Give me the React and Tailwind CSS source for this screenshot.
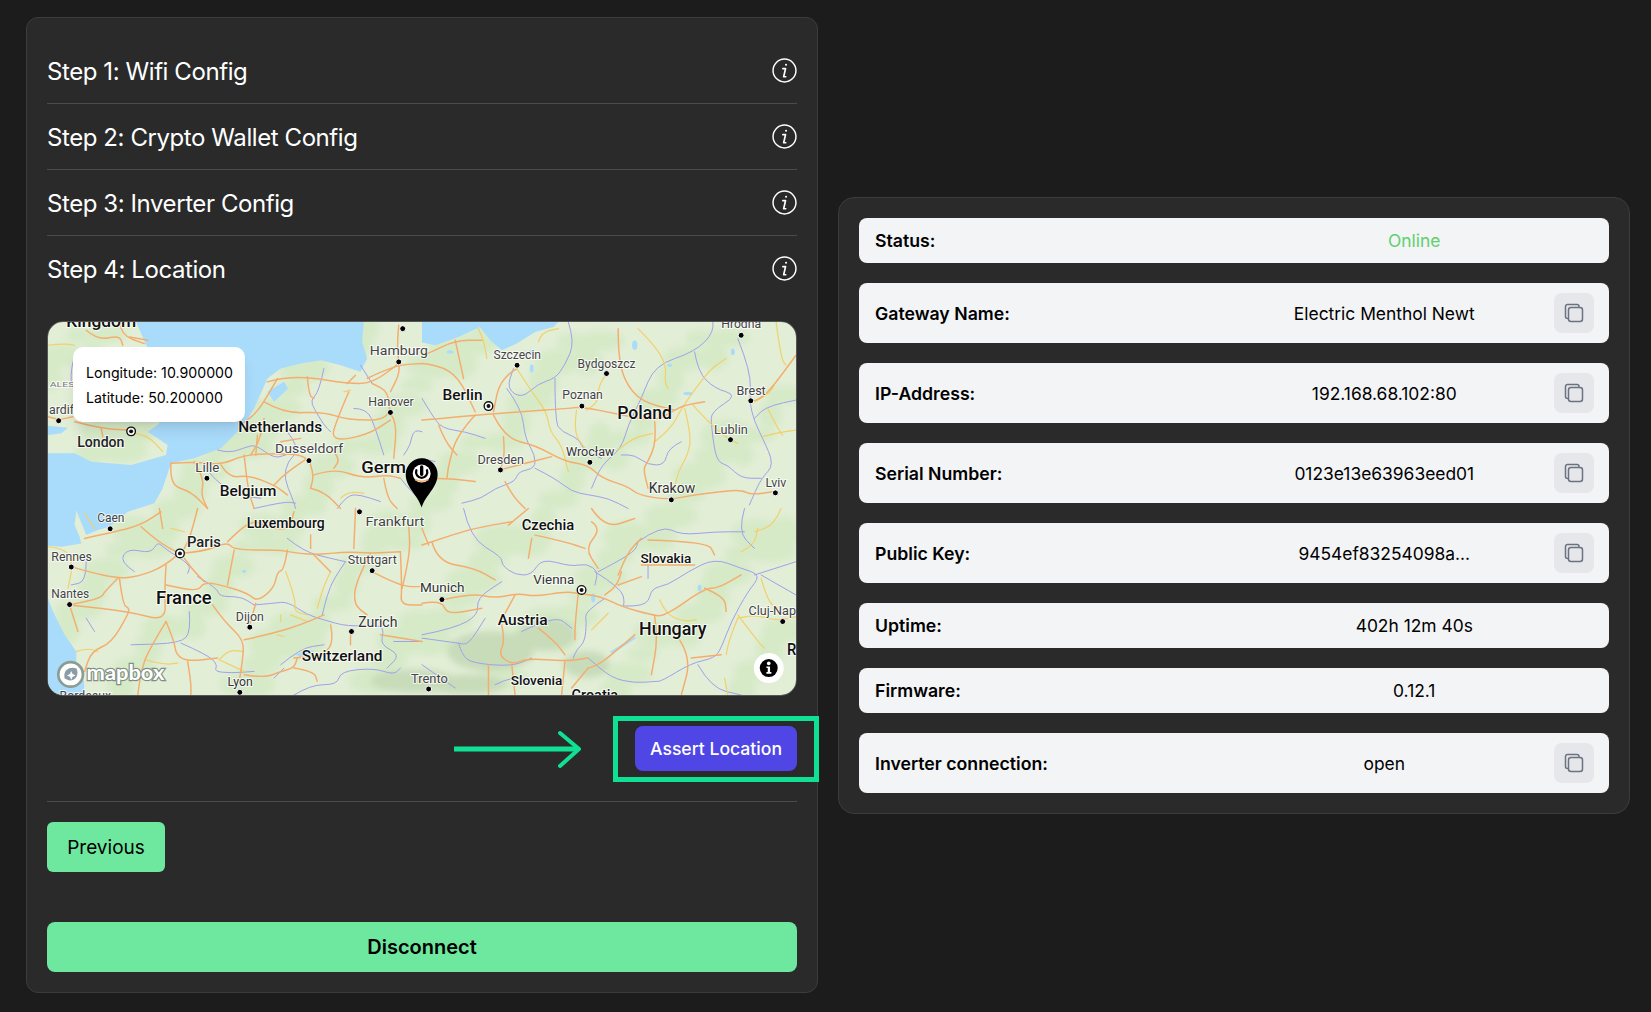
import React from "react";

// map is drawn in a 3x coordinate space (2250x1122), split in four quadrants
const QUADS = [
  {
    dx: 0,
    dy: 0,
    p: [
      "830,140 815,210 790,235 800,260 830,310 850,330",
      "720,330 760,380 720,420 710,470 735,530 745,561",
      "510,385 545,395 600,375 625,370 680,410 715,400",
      "470,430 500,480 590,525 640,530",
      "620,561 710,540 745,545",
      "940,130 975,185",
      "1125,330 1100,320 1090,370 1070,400",
      "920,260 960,260 985,320 1010,400",
      "870,561 900,520 940,520 1000,540",
      "1060,470 1100,520 1125,530",
      "75,120 65,170 80,200",
    ],
    y: ["0,70 50,65 80,70", "890,210 910,205", "880,530 900,510 950,515", "240,330 300,340 345,390"],
    o: [
      "115,25 150,55 215,40 225,70",
      "215,0 220,40 290,65",
      "245,45 300,55",
      "0,285 30,295 75,285",
      "80,300 160,320 240,325",
      "160,320 165,345",
      "660,180 690,170 780,165 900,185 975,185 1055,125",
      "780,165 785,220 800,230",
      "690,170 650,240 620,280 585,305",
      "650,240 710,275 830,270 900,295 1030,295 1025,210 975,185",
      "1055,125 1060,150 1030,210",
      "900,185 925,160",
      "905,210 870,290 850,360 960,340 1030,295",
      "1030,275 1050,300 1040,410",
      "960,170 1040,130 1125,125",
      "1055,10 1050,60 1055,125",
      "370,425 440,420 520,430 590,400 680,395 780,400 800,460 790,500",
      "590,400 600,500 620,561",
      "520,430 545,470 600,460 680,490 720,520",
      "440,420 470,470 460,520 480,561",
      "370,425 365,490 430,510 480,561",
      "630,340 625,400",
      "650,290 640,350 610,400",
      "700,360 760,350",
      "800,460 860,440 945,470 1020,460 1060,470",
      "850,380 880,410 860,440",
      "790,500 830,510 880,561",
      "1010,470 1020,530 1050,561",
      "780,410 720,450 680,490",
    ],
    dots: [[32, 297], [1055, 120], [1067, 20], [1030, 272], [785, 417], [478, 470]],
    rings: [[250, 329]],
    labels: [
      ["Kingdom", 55, 15, 48, 500, 210],
      ["ALES", 5, 195, 24, 400, 75, "#777"],
      ["ardif", 3, 278, 36, 400, 75, "#444"],
      ["Hamburg", 968, 98, 38, 400, 175, "#444"],
      ["Hanover", 963, 254, 36, 400, 137, "#444"],
      ["Netherlands", 572, 330, 44, 500, 253],
      ["Dusseldorf", 683, 395, 40, 400, 205, "#444"],
      ["Germ", 942, 455, 52, 500, 135],
      ["London", 88, 375, 44, 500, 142, "#222"],
      ["Lille", 443, 450, 36, 400, 72, "#444"],
      ["Belgium", 517, 522, 44, 500, 170],
    ],
  },
  {
    dx: 1125,
    dy: 0,
    p: [
      "440,0 460,60 430,130 400,170 350,185 300,230 255,200 275,140",
      "400,170 400,300 420,330 470,350 490,390 540,410",
      "875,0 880,30 820,90 700,130 660,230 620,310 600,380 540,430 510,500",
      "950,50 990,150 985,240 1000,300 1025,350 1060,430 1020,470 985,550",
      "820,90 830,150 880,200 950,220 870,270 870,310 885,420 920,430 960,470 1020,470",
      "255,200 300,260 310,350 340,400 340,440 290,450 280,480 220,500 180,530 120,545",
      "340,440 400,470 450,510 500,520 560,530 620,561",
      "780,360 740,380 730,430 680,430 640,400 600,400",
      "0,230 30,280 60,320 130,330 190,350",
      "0,410 40,420",
      "1125,235 1040,250 1000,290",
    ],
    y: [
      "285,140 330,210 375,270 385,330 420,370 440,450",
      "350,60 360,30 410,20",
      "555,155 530,190 530,240 495,265",
      "465,265 455,330 490,380",
      "590,385 630,350 695,335",
      "700,360 750,320 780,260 830,190 870,140 915,110",
      "790,260 810,340 800,400 770,450 760,500",
      "815,250 870,310 920,350 950,365",
      "650,20 700,70 735,130 730,180 740,200",
      "1000,240 1040,220 1060,190",
      "1040,260 1070,320 1085,340",
      "1025,345 1060,335 1125,325",
      "170,20 185,50 195,110",
      "1065,0 1080,110 1095,130",
    ],
    o: [
      "0,295 60,290 160,280 300,270 440,260 480,255 580,275 700,300 760,265 790,250 850,240",
      "100,55 125,170",
      "0,100 20,95 100,55 180,55",
      "285,140 235,170 215,270",
      "0,125 50,130 110,165 160,270",
      "215,280 250,350 340,370 430,420 500,430 540,470 620,495 650,520 740,535 820,520 900,510 960,505 990,520 1060,510",
      "160,280 105,340 80,430 75,470",
      "50,310 70,360 105,400",
      "245,345 250,400 235,445",
      "235,445 310,425 390,405",
      "700,300 705,360 680,420 665,440 680,500",
      "590,20 590,100 610,180 660,240 760,265",
      "1125,100 1060,190 1020,230 990,240",
      "0,470 80,470 160,480",
      "250,480 270,520 310,561",
    ],
    dots: [[286, 130], [555, 155], [481, 253], [505, 422], [236, 445], [750, 535], [989, 237], [928, 354], [1063, 514], [960, 40]],
    rings: [[200, 253]],
    labels: [
      ["Berlin", 62, 235, 44, 500, 120],
      ["Szczecin", 215, 112, 38, 400, 143, "#444"],
      ["Bydgoszcz", 468, 137, 38, 400, 174, "#444"],
      ["Poznan", 422, 233, 38, 400, 122, "#444"],
      ["Poland", 587, 292, 56, 500, 165],
      ["Wrocław", 433, 403, 40, 400, 146, "#333"],
      ["Dresden", 167, 427, 38, 400, 140, "#444"],
      ["Krakow", 682, 515, 44, 400, 140, "#333"],
      ["Brest", 946, 219, 38, 400, 88, "#444"],
      ["Lublin", 878, 336, 38, 400, 102, "#444"],
      ["Lviv", 1033, 495, 36, 400, 63, "#444"],
      ["Hrodna", 900, 18, 36, 400, 120, "#444"],
    ],
  },
  {
    dx: 0,
    dy: 561,
    p: [
      "115,160 115,220 70,230",
      "260,190 215,160 240,120 310,135 330,100 350,120 430,170 420,195",
      "450,205 510,240 515,265 580,265 620,290",
      "620,290 680,285 720,280 780,320 830,335 900,355 1000,350 1010,370 1000,410 1060,440 1020,480",
      "895,160 860,210 840,260 825,320",
      "425,310 430,370 400,405 250,410",
      "400,405 480,440 510,470 500,490 550,495 620,490",
      "700,470 760,420 830,410",
      "680,510 710,480",
      "740,561 790,530 870,530 880,490 980,480 1040,500 1060,480",
      "115,330 140,370",
      "720,90 770,130 850,150 895,160",
      "1125,400 1040,400",
    ],
    y: [
      "0,115 55,120 75,170 60,240",
      "110,15 140,60",
      "85,430 120,420 150,430",
      "290,455 350,470 390,465",
      "515,455 540,425 585,430",
      "515,455 590,490",
      "715,190 745,270 740,310 780,320",
      "370,60 410,70",
      "850,190 830,230 810,300",
      "690,380 710,385",
      "700,320 700,340",
      "730,320 780,340",
    ],
    o: [
      "110,90 200,70 280,50 340,10",
      "280,55 330,100 395,135",
      "395,135 350,175 270,205 210,210 120,190 70,175",
      "395,135 470,130 540,100 560,125 700,125 720,130 800,140 900,130 970,135 1060,130",
      "540,100 590,50 625,40",
      "560,125 540,230",
      "720,125 710,185 690,190 680,240 630,280 600,255 540,235 470,220 450,250 355,230",
      "355,170 350,250 355,340 245,310 65,290",
      "210,210 170,250 160,270 65,290",
      "215,210 225,290 245,300 240,320 190,405 130,430 110,490",
      "355,340 380,400 385,440 420,460 510,450",
      "355,340 300,430 280,490 270,561",
      "495,290 530,340 590,395 585,460 575,520",
      "625,285 605,355",
      "590,395 680,375 760,350 830,320",
      "65,290 90,370",
      "335,0 345,60",
      "450,0 430,80 410,120",
      "470,220 440,190 410,150",
      "920,120 925,0",
      "970,135 925,220 920,290 960,320",
      "975,190 1060,235 1125,235",
      "1060,130 1065,240 1060,290 1125,290",
      "1065,240 1090,140 1085,50",
      "850,350 860,400 830,440 740,450",
      "420,460 430,520 430,561",
      "590,500 650,510 700,490 740,480 750,450",
      "740,480 800,490 810,520",
      "910,370 910,410",
      "1000,380 1125,400",
      "625,40 720,80 740,10",
      "790,80 790,120",
      "800,140 850,190",
    ],
    dots: [[187, 61], [70, 176], [65, 289], [607, 357], [913, 370], [577, 553], [937, 10], [975, 187]],
    rings: [[397, 135]],
    labels: [
      ["Caen", 148, 41, 36, 400, 82, "#444"],
      ["Paris", 418, 117, 44, 500, 102, "#222"],
      ["Rennes", 10, 157, 38, 400, 122, "#444"],
      ["Nantes", 10, 270, 38, 400, 114, "#444"],
      ["France", 325, 288, 54, 500, 167],
      ["Dijon", 565, 338, 36, 400, 84, "#444"],
      ["Luxembourg", 598, 58, 42, 500, 234],
      ["Frankfurt", 955, 52, 40, 400, 177, "#444"],
      ["Stuttgart", 902, 168, 36, 400, 147, "#444"],
      ["Zurich", 933, 355, 44, 400, 118, "#333"],
      ["Switzerland", 763, 458, 44, 500, 243],
      ["Lyon", 540, 535, 36, 400, 76, "#333"],
      ["Bordeaux", 35, 575, 36, 400, 155, "#444"],
      ["Trento", 1092, 525, 36, 400, 111, "#444"],
    ],
  },
  {
    dx: 1125,
    dy: 561,
    p: [
      "125,0 145,90 240,145 240,170 280,200 330,200 360,150 450,175 495,165 530,190 520,230",
      "530,190 550,180 640,130 650,100",
      "520,190 600,240 610,285 600,295 680,290 690,240 740,230 800,190 880,150 960,180 1020,200 980,250 930,340 900,420 880,450 810,465 720,520 700,520 640,525 570,510 500,450",
      "550,270 490,310 495,340 490,400 465,425 455,450",
      "1125,160 1000,200",
      "0,390 110,405 140,410 190,330",
      "0,380 100,360 170,320 165,270 240,220",
      "110,405 120,440 150,465 270,475 330,450",
      "1020,200 1125,260",
      "830,470 870,540 960,561",
      "680,170 680,210",
      "220,530 280,500 330,530",
      "300,370 400,320 450,360",
      "0,470 100,540",
      "970,0 950,70 1000,120",
      "650,100 720,50 780,80 880,70 970,70",
    ],
    y: [
      "510,365 560,315",
      "715,275 735,320 790,340 825,335",
      "1020,210 1040,280 1070,300",
      "950,320 1010,400 1030,420",
      "950,330 925,390 915,440",
      "910,510 920,561",
      "960,130 1000,110 1010,60",
      "1080,0 1060,50 1000,70",
      "1125,325 1080,340 1000,320 950,330",
    ],
    o: [
      "0,110 30,100 150,60 270,40",
      "30,100 45,160 160,180 220,215",
      "510,40 540,60 490,120 530,180",
      "340,80 430,100 490,120",
      "60,275 150,255 220,270 290,255 340,265 430,250 470,255 540,265 600,295 690,320 730,325 850,240 890,240 960,200",
      "470,255 460,350 460,395",
      "0,285 60,275 75,320 180,300",
      "280,260 250,315",
      "240,350 250,400 230,440 270,470 320,450 430,460 500,450",
      "350,360 400,400 430,440",
      "20,110 0,60",
      "700,325 710,390 690,500",
      "775,395 810,450 780,561",
      "640,380 570,440 530,470 500,480",
      "850,240 910,265 915,310",
      "600,190 590,230 550,260",
      "590,230 660,205",
      "660,90 625,120 590,200",
      "660,170 700,170 820,170",
      "680,95 860,100 880,140",
      "810,450 900,440",
      "430,460 420,561",
      "500,480 450,540",
      "200,470 200,561",
      "270,470 280,561",
      "320,0 260,50",
      "510,0 550,60 640,30",
      "330,90 320,150",
    ],
    dots: [[60, 274], [20, 543], [1085, 340]],
    rings: [[480, 245]],
    labels: [
      ["Czechia", 300, 65, 46, 500, 158],
      ["Slovakia", 657, 165, 40, 500, 153],
      ["Vienna", 335, 228, 40, 400, 123, "#333"],
      ["Munich", -6, 252, 40, 400, 134, "#333"],
      ["Austria", 228, 350, 44, 500, 150],
      ["Hungary", 653, 380, 54, 500, 203],
      ["Slovenia", 267, 532, 40, 500, 155],
      ["Cluj-Nap", 982, 321, 36, 400, 143, "#444"],
      ["R", 1098, 442, 50, 500, 28],
      ["Croatia", 450, 575, 44, 500, 140],
    ],
  },
];

// soft vegetation blotches, scattered evenly over the whole map
const GREEN_PATCHES = Array.from({ length: 150 }, (_, i) => {
  const x = (i * 467 + 90) % 2250;
  const y = (i * 283 + 40) % 1122;
  const rx = 36 + ((i * 37) % 48);
  const ry = 22 + ((i * 23) % 30);
  return [x, y, rx, ry];
});

const ALPS = [
  [1330, 990, 130, 60], [1500, 940, 90, 50], [1100, 1080, 130, 35], [1260, 1090, 120, 30], [1620, 1030, 70, 40],
];

const LAKES = [
  [1455, 140, 6, 12], [1765, 70, 8, 14], [1925, 215, 14, 5], [1455, 90, 10, 4], [1210, 90, 10, 5], [1870, 130, 7, 5],
  [2060, 90, 6, 10], [1640, 830, 6, 14], [1960, 800, 6, 10], [590, 750, 6, 5],
];

// rounds the corners of a point list so the roads don't look like straight segments
function smooth(points) {
  const pts = points.split(" ").map((p) => p.split(",").map(Number));
  let d = `M${pts[0][0]} ${pts[0][1]}`;
  for (let i = 1; i < pts.length - 1; i++) {
    const mx = (pts[i][0] + pts[i + 1][0]) / 2;
    const my = (pts[i][1] + pts[i + 1][1]) / 2;
    d += ` Q${pts[i][0]} ${pts[i][1]} ${mx} ${my}`;
  }
  const last = pts[pts.length - 1];
  return d + ` L${last[0]} ${last[1]}`;
}

function Roads({ lines, color, width }) {
  return lines.map((l, i) => (
    <path key={i} d={smooth(l)} fill="none" stroke={color} strokeWidth={width} strokeLinecap="round" />
  ));
}

function MapDrawing() {
  return (
    <svg viewBox="0 0 2250 1122" preserveAspectRatio="none" className="block w-full h-full">
      <defs>
        <filter id="soft" x="-30%" y="-30%" width="160%" height="160%">
          <feGaussianBlur stdDeviation="10" />
        </filter>
      </defs>
      <rect width="2250" height="1122" fill="#e2eed6" />
      <g filter="url(#soft)">
        {GREEN_PATCHES.map(([x, y, rx, ry], i) => (
          <ellipse key={i} cx={x} cy={y} rx={rx} ry={ry} fill="#d6eac8" />
        ))}
        {ALPS.map(([x, y, rx, ry], i) => (
          <ellipse key={i} cx={x} cy={y} rx={rx} ry={ry} fill="#c8dcba" />
        ))}
      </g>
      <g fill="#a9dbfb">
        <polygon points="265,0 950,0 945,60 960,110 940,150 880,130 820,115 760,125 700,140 660,170 640,215 620,260 590,310 550,350 520,380 440,410 370,425 345,500 320,545 240,571 185,616 150,626 115,641 95,591 85,566 80,611 95,646 100,666 40,676 0,673 0,395 80,395 130,420 250,430 355,400 360,370 300,330 335,305 320,200 300,80" />
        <polygon points="1125,0 1535,0 1520,15 1465,30 1410,65 1365,85 1330,55 1300,15 1235,45 1165,70 1125,62" />
        <polygon points="0,831 15,871 50,941 85,991 85,1031 108,1081 110,1122 0,1122" />
        <polygon points="0,312 60,318 40,335 0,340" />
        <polygon points="660,210 710,180 722,200 680,240" />
        <polygon points="1690,992 1765,946 1768,952 1697,998" />
        <polygon points="745,1000 790,985 800,992 760,1008" />
        {LAKES.map(([x, y, rx, ry], i) => (
          <ellipse key={i} cx={x} cy={y} rx={rx} ry={ry} />
        ))}
      </g>
      {QUADS.map((q, i) => (
        <g key={i} transform={`translate(${q.dx} ${q.dy})`}>
          <Roads lines={q.p} color="#a0a0ea" width={3} />
          <Roads lines={q.y} color="#f2d06a" width={3.6} />
          <Roads lines={q.o} color="#f3ae6e" width={4.4} />
        </g>
      ))}
      {QUADS.map((q, i) => (
        <g key={i} transform={`translate(${q.dx} ${q.dy})`}>
          {q.dots.map(([x, y], j) => (
            <circle key={j} cx={x} cy={y} r="9" fill="#000" stroke="#fff" strokeWidth="3" />
          ))}
          {q.rings.map(([x, y], j) => (
            <g key={j}>
              <circle cx={x} cy={y} r="13" fill="#fff" stroke="#111" strokeWidth="4" />
              <circle cx={x} cy={y} r="6" fill="#111" />
            </g>
          ))}
          {q.labels.map(([t, x, y, size, weight, w, color], j) => (
            <text
              key={j}
              x={x}
              y={y}
              fontSize={size}
              fontWeight={weight}
              textLength={w}
              lengthAdjust="spacingAndGlyphs"
              fill={color || "#111"}
              stroke="#fff"
              strokeOpacity="0.75"
              strokeWidth="6"
              paintOrder="stroke"
              fontFamily="Roboto, sans-serif"
            >
              {t}
            </text>
          ))}
        </g>
      ))}
      {/* pin */}
      <path d="M1124 558 C1112 520 1076 498 1076 458 A48 48 0 0 1 1172 458 C1172 498 1136 520 1124 558 Z" fill="#000" />
      <circle cx="1124" cy="456" r="27" fill="#fff" />
      <path d="M1108 446 A17 17 0 1 0 1140 446" fill="none" stroke="#000" strokeWidth="7" strokeLinecap="round" />
      <path d="M1124 436 V458" stroke="#000" strokeWidth="10" strokeLinecap="round" />
      <path d="M1104 474 Q1124 484 1144 474" fill="none" stroke="#f3ae6e" strokeWidth="5" />
      {/* mapbox logo */}
      <g>
        <circle cx="68" cy="1060" r="37" fill="#fff" stroke="#8b9c93" strokeWidth="8" />
        <path d="M50 1072 C44 1044 68 1036 86 1042 C94 1060 84 1080 62 1078 Z" fill="#8b9ca6" />
        <path d="M70 1050 l4 9 9 4 -9 4 -4 9 -4 -9 -9 -4 9 -4 Z" fill="#fff" />
        <text
          x="116"
          y="1078"
          fontSize="62"
          fontWeight="700"
          textLength="234"
          lengthAdjust="spacingAndGlyphs"
          fill="#fff"
          stroke="#7f8f82"
          strokeWidth="7"
          paintOrder="stroke"
          fontFamily="Lato, sans-serif"
        >
          mapbox
        </text>
      </g>
      {/* attribution button */}
      <circle cx="2168" cy="1041" r="45" fill="#fff" />
      <circle cx="2168" cy="1041" r="27" fill="#000" />
      <circle cx="2168" cy="1027" r="5.5" fill="#fff" />
      <path d="M2161 1036 H2172 V1053 H2176 V1058 H2161 V1053 H2165 V1041 H2161 Z" fill="#fff" />
    </svg>
  );
}

function InfoIcon() {
  return (
    <svg width="25" height="25" viewBox="0 0 24 24" fill="none" stroke="#fff" strokeWidth="1.4" strokeLinecap="round" strokeLinejoin="round">
      <circle cx="12" cy="12" r="11" />
      <path d="M10.4 10.2 H13 L11.2 18 H13.2" strokeWidth="1.6" />
      <circle cx="13.5" cy="6.4" r="1" fill="#fff" stroke="none" />
    </svg>
  );
}

function CopyIcon() {
  return (
    <svg width="20" height="20" viewBox="0 0 20 20" fill="none" stroke="#6b7280" strokeWidth="1.5" strokeLinecap="round" strokeLinejoin="round">
      <path d="M3.5 15.5 A2 2 0 0 1 1.5 13.5 V3.5 A2 2 0 0 1 3.5 1.5 H13 A2 2 0 0 1 15 3.5" />
      <rect x="4.5" y="4.5" width="14" height="14" rx="2.5" />
    </svg>
  );
}

function Step({ title, last }) {
  return (
    <div className={`flex items-center justify-between ${last ? "h-[65px]" : "h-[66px] border-b border-[#4b4b4b]"}`}>
      <span className="pt-0.5 text-2xl font-normal tracking-[-0.42px] text-white">{title}</span>
      <InfoIcon />
    </div>
  );
}

function InfoRow({ label, value, copy, valueClass }) {
  return (
    <div className={`flex items-center bg-[#f3f4f6] rounded-lg pl-4 pr-[15px] ${copy ? "h-[60px]" : "h-[45px]"}`}>
      <div className="w-1/2 pt-0.5 text-[17.7px] leading-6 font-semibold text-black">{label}</div>
      <div className="w-1/2 flex items-center">
        <div className={`flex-1 pt-0.5 text-center text-[17.4px] leading-6 ${valueClass || "text-black"}`}>{value}</div>
        {copy && (
          <button className="ml-5 w-10 h-10 rounded-lg bg-[#e5e7eb] flex items-center justify-center">
            <CopyIcon />
          </button>
        )}
      </div>
    </div>
  );
}

export default function App() {
  return (
    <div className="min-h-screen bg-[#1c1c1c] font-['Inter',sans-serif]">
      <div className="flex items-center gap-5 pl-[26px] pt-[17px]">
        <div className="w-[792px] shrink-0 rounded-xl border border-[#3c3c3c] bg-[#2a2a2a] p-5">
          <Step title="Step 1: Wifi Config" />
          <Step title="Step 2: Crypto Wallet Config" />
          <Step title="Step 3: Inverter Config" />
          <Step title="Step 4: Location" last />

          <div className="mt-5 h-[375px] rounded-2xl overflow-hidden border border-[#555]">
            <div className="relative w-full h-full">
              <MapDrawing />
              <div className="absolute left-[25px] top-[25px] w-[172px] h-[75px] rounded-[10px] bg-white px-[13px] py-[13px] text-[14.2px] leading-[25px] whitespace-nowrap text-black shadow-lg">
                <div>Longitude: 10.900000</div>
                <div>Latitude: 50.200000</div>
              </div>
            </div>
          </div>

          <div className="relative mt-[30px] flex justify-end">
            <button className="w-[162px] h-[45px] rounded-lg bg-[#4f46e5] pt-0.5 text-[17.6px] text-white font-medium">Assert Location</button>
            <div className="absolute left-[566px] -top-[10px] w-[206px] h-[66px] border-[5px] border-[#10e093]" />
            <svg className="absolute left-[407px] top-[3px]" width="130" height="40" viewBox="0 0 130 40" fill="none">
              <path d="M0 20 H124" stroke="#10e093" strokeWidth="5" />
              <path d="M106 4 L125 20 L106 37" stroke="#10e093" strokeWidth="4" strokeLinecap="round" strokeLinejoin="round" />
            </svg>
          </div>

          <div className="mt-[30px] border-t border-[#4b4b4b]" />

          <button className="mt-5 block w-[118px] h-[50px] rounded-md bg-[#6ee79f] pt-0.5 text-black text-[19px]">Previous</button>
          <button className="mt-[50px] block w-full h-[50px] rounded-lg bg-[#6ee79f] text-black text-xl font-semibold">Disconnect</button>
        </div>

        <div className="w-[792px] shrink-0 rounded-2xl border border-[#3c3c3c] bg-[#2a2a2a] p-5 flex flex-col gap-5">
          <InfoRow label="Status:" value="Online" valueClass="text-[#5fd06d]" />
          <InfoRow label="Gateway Name:" value="Electric Menthol Newt" copy />
          <InfoRow label="IP-Address:" value="192.168.68.102:80" copy />
          <InfoRow label="Serial Number:" value="0123e13e63963eed01" copy />
          <InfoRow label="Public Key:" value="9454ef83254098a..." copy />
          <InfoRow label="Uptime:" value="402h 12m 40s" />
          <InfoRow label="Firmware:" value="0.12.1" />
          <InfoRow label="Inverter connection:" value="open" copy />
        </div>
      </div>
    </div>
  );
}
